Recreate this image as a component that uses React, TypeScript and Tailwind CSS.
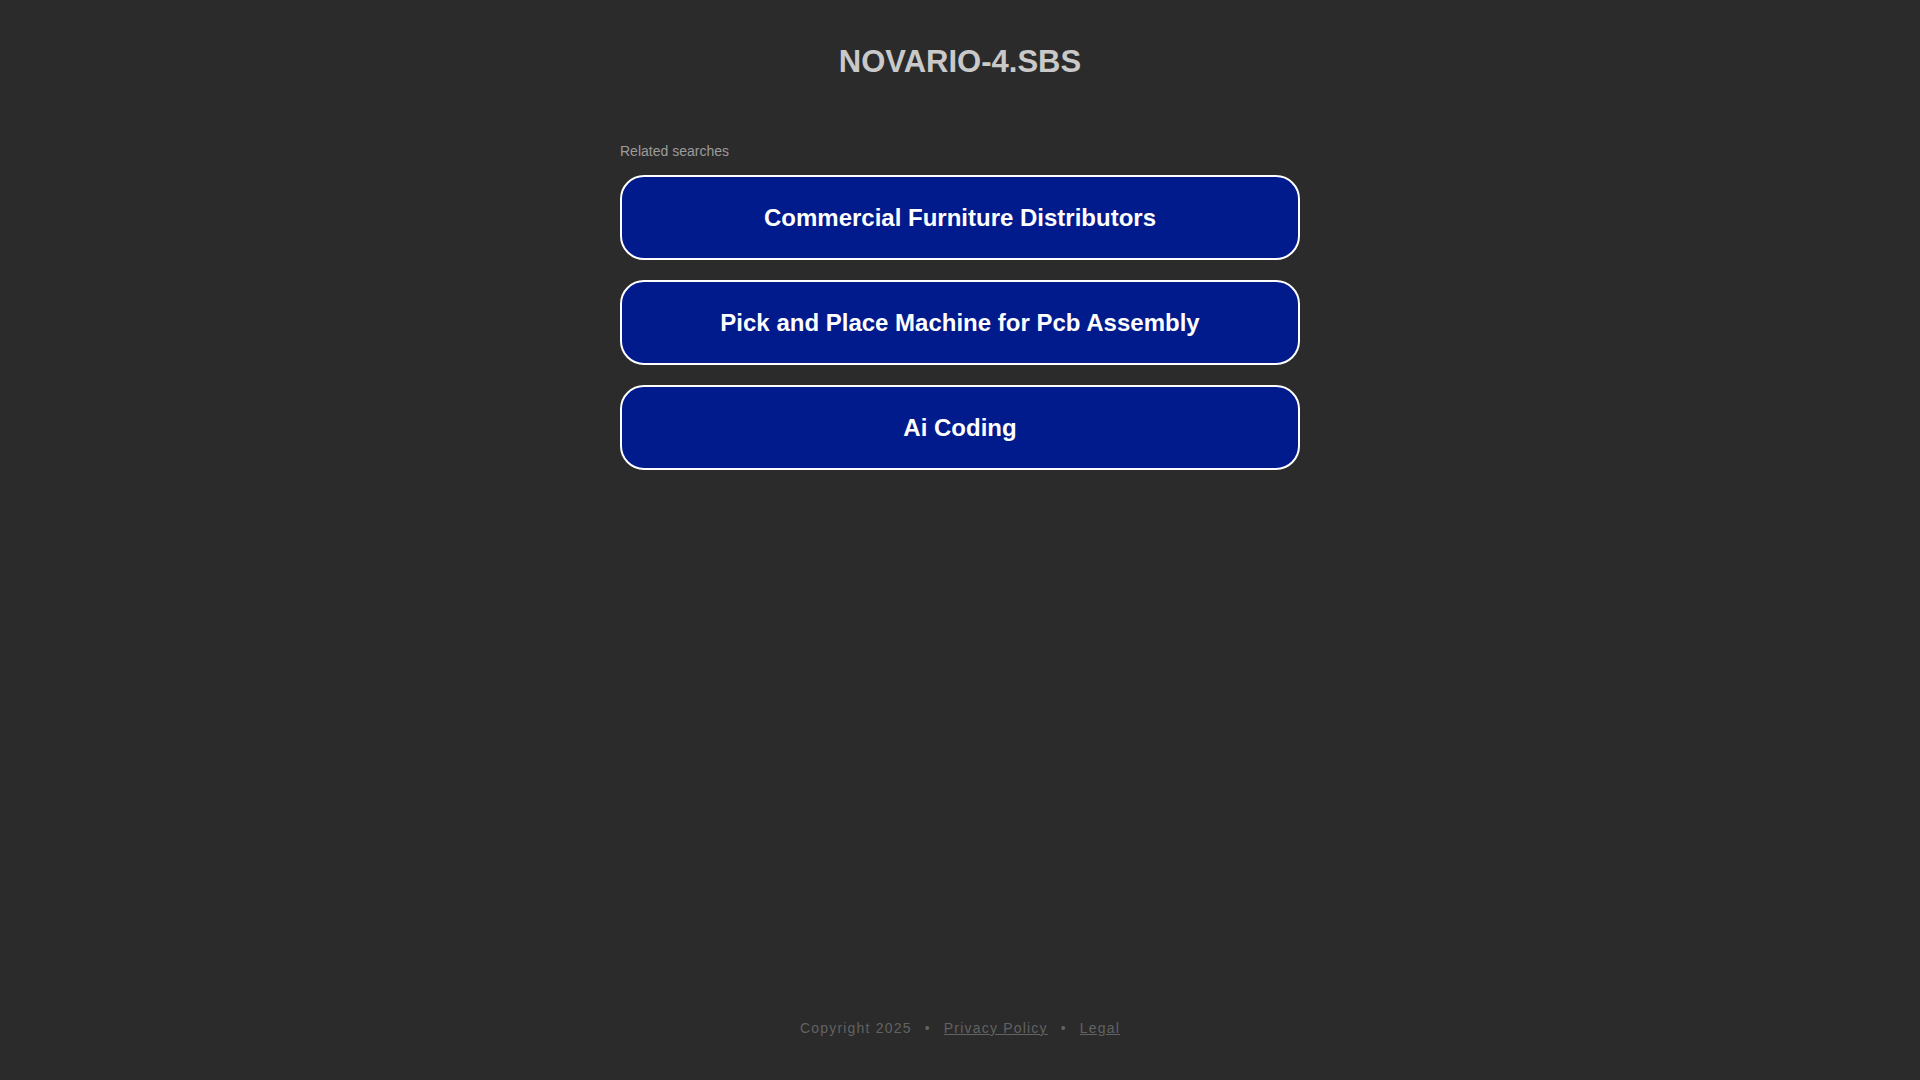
const links = [
  "Commercial Furniture Distributors",
  "Pick and Place Machine for Pcb Assembly",
  "Ai Coding",
];

export default function App() {
  return (
    <div
      className="min-h-screen flex flex-col bg-[#2b2b2b]"
      style={{ fontFamily: '"Liberation Sans", Arial, sans-serif' }}
    >
      {/* Domain title */}
      <h1 className="mt-[44px] text-center text-[31px] leading-[36px] font-bold text-[#c9c9c9]">
        NOVARIO-4.SBS
      </h1>

      {/* Related searches */}
      <div className="w-[680px] mx-auto mt-[63px]">
        <p className="text-[14px] leading-[16px] text-[#9b9b9b]">Related searches</p>
        <div className="flex flex-col gap-[20px] mt-[16px]">
          {links.map((label) => (
            <a
              key={label}
              href="#"
              className="h-[85px] flex items-center justify-center rounded-[24px] border-2 border-white bg-[#011a8c] text-white text-[24px] font-bold"
            >
              {label}
            </a>
          ))}
        </div>
      </div>

      {/* Footer */}
      <footer className="mt-auto pb-[42px] flex justify-center items-center text-[14px] leading-[20px] tracking-[1.2px] text-[#626262]">
        <span>Copyright 2025</span>
        <span className="mx-[13px]">•</span>
        <a href="#" className="underline">Privacy Policy</a>
        <span className="mx-[13px]">•</span>
        <a href="#" className="underline">Legal</a>
      </footer>
    </div>
  );
}
